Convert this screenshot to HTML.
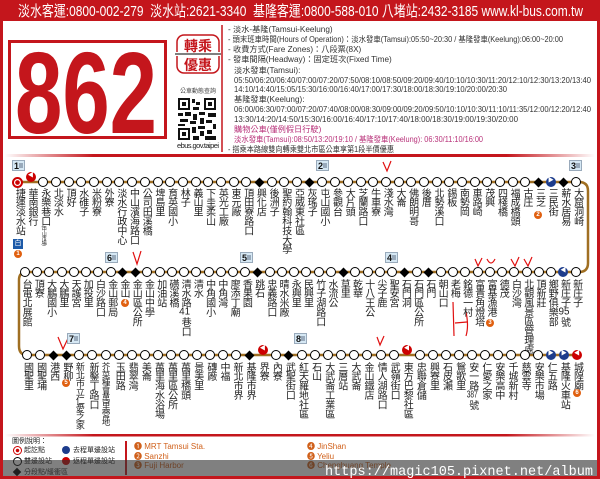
<!DOCTYPE html>
<html><head><meta charset="utf-8"><style>
*{margin:0;padding:0}
body{width:600px;height:479px;position:relative;overflow:hidden;background:#fff;font-family:"Liberation Sans","Noto Sans CJK TC",sans-serif}
.frame{position:absolute;left:0;top:0;width:600px;height:479px;box-sizing:border-box;border:3px solid #c4161c;border-top:none;z-index:5}
.r{position:absolute;display:flex;align-items:flex-start}
.r i{font-style:normal;flex:none;writing-mode:vertical-rl;font-size:10px;position:relative;color:#222;letter-spacing:-0.6px}
.r1 i{width:12.7px;line-height:12.7px;--o:-6px}
.r2 i{width:12.24px;line-height:12.24px;--o:-7px}
.r3 i{width:13.1px;line-height:13.1px;--o:-7px}
.r i::before{content:'';position:absolute;left:50%;top:calc(var(--o) - 5px);box-sizing:border-box;width:10px;height:10px;margin-left:-5px;border:1.6px solid #000;border-radius:50%;background:#fff;writing-mode:horizontal-tb;font-size:6px;line-height:7px;text-align:center;color:#fff;letter-spacing:0}
.r i.d::before{border:0;background:#000;border-radius:0;width:7px;height:7px;margin-left:-3.5px;top:calc(var(--o) - 3.5px);transform:rotate(45deg)}
.r i.s::before{width:11px;height:11px;margin-left:-5.5px;border:2px solid #c00;background:radial-gradient(#c00 0 2px,#fff 2.6px)}
.r i.rl::before{content:'◀';background:#c00;border-color:#c00;top:calc(var(--o) - 10px)}
.r i.rl2::before{content:'◀';background:#c00;border-color:#c00}
.r i.br::before{content:'▶';background:#1d3c8c;border-color:#1d3c8c}
.r i.bl::before{content:'◀';background:#1d3c8c;border-color:#1d3c8c}
.sm{font-size:5px;writing-mode:vertical-rl}
.num{position:absolute;width:8px;height:8px;border-radius:50%;background:#e06010;color:#fff;font-size:6px;line-height:8px;text-align:center;font-weight:bold}
.sec{position:absolute;width:13px;height:11px;background:#d6e8f4;border:1px solid #9ab;box-sizing:border-box;font-size:9px;font-weight:bold;line-height:10px;padding-left:1px;color:#111}
.sec:after{content:'';position:absolute;right:1px;top:2px;width:4px;height:5px;background:#9ab}
.lg{position:absolute;font-size:7px;color:#222}
</style></head><body>
<div class="frame"></div>
<svg width="600" height="479" style="position:absolute;left:0;top:0">
<defs>
<linearGradient id="g" x1="0" x2="1"><stop offset="0" stop-color="#c4161c" stop-opacity="0"/><stop offset="0.15" stop-color="#c4161c"/><stop offset="0.85" stop-color="#c4161c"/><stop offset="1" stop-color="#c4161c" stop-opacity="0"/></linearGradient>
</defs>
<rect x="0" y="0" width="600" height="21" fill="#c4161c"/>
<text x="18" y="16" fill="#fff" font-size="15" textLength="565" lengthAdjust="spacingAndGlyphs" font-family="Liberation Sans, Noto Sans CJK TC, sans-serif">淡水客運:0800-002-279 &#160;淡水站:2621-3340 &#160;基隆客運:0800-588-010 八堵站:2432-3185 www.kl-bus.com.tw</text>
<rect x="9.5" y="41.5" width="156" height="96" fill="none" stroke="#c4161c" stroke-width="3"/>
<text x="15" y="133" fill="#c4161c" font-size="116" font-weight="bold" textLength="142" lengthAdjust="spacingAndGlyphs">862</text>
<rect x="177" y="35" width="42" height="38" rx="7" fill="none" stroke="#c4161c" stroke-width="1.5"/>
<rect x="172" y="52" width="52" height="4" fill="#fff"/>
<line x1="175" y1="54" x2="221" y2="54" stroke="#555" stroke-width="1.5"/>
<text x="198" y="51" fill="#c4161c" font-size="14" font-weight="bold" text-anchor="middle" font-family="Noto Sans CJK TC, sans-serif">轉乘</text>
<text x="198" y="70" fill="#c4161c" font-size="14" font-weight="bold" text-anchor="middle" font-family="Noto Sans CJK TC, sans-serif">優惠</text>
<text x="198" y="93" fill="#444" font-size="6" text-anchor="middle" font-family="Noto Sans CJK TC, sans-serif">公車動態查詢</text>
<g fill="#111">
<rect x="178" y="98" width="12" height="12"/><rect x="204" y="98" width="12" height="12"/><rect x="178" y="128" width="12" height="12"/>
<rect x="180" y="100" width="8" height="8" fill="#fff"/><rect x="206" y="100" width="8" height="8" fill="#fff"/><rect x="180" y="130" width="8" height="8" fill="#fff"/>
<rect x="182" y="102" width="4" height="4"/><rect x="208" y="102" width="4" height="4"/><rect x="182" y="132" width="4" height="4"/>
<rect x="192" y="99" width="3" height="4"/><rect x="196" y="102" width="4" height="3"/><rect x="193" y="107" width="6" height="3"/><rect x="178" y="113" width="5" height="3"/><rect x="185" y="112" width="6" height="4"/><rect x="193" y="114" width="4" height="6"/><rect x="199" y="112" width="6" height="3"/><rect x="208" y="113" width="8" height="4"/><rect x="180" y="119" width="8" height="3"/><rect x="190" y="121" width="6" height="3"/><rect x="200" y="118" width="4" height="6"/><rect x="206" y="120" width="6" height="3"/><rect x="213" y="124" width="3" height="5"/><rect x="192" y="127" width="4" height="6"/><rect x="198" y="126" width="7" height="3"/><rect x="200" y="131" width="4" height="5"/><rect x="207" y="130" width="5" height="4"/><rect x="193" y="136" width="6" height="4"/><rect x="205" y="136" width="11" height="4"/><rect x="178" y="124" width="7" height="2"/>
</g>
<text x="198" y="148" fill="#222" font-size="7.5" text-anchor="middle" textLength="42">ebus.gov.taipei</text>
<line x1="222" y1="25" x2="222" y2="152" stroke="#c4161c" stroke-width="1.5"/>
<g font-size="8.2" fill="#333" font-family="Liberation Sans, Noto Sans CJK TC, sans-serif">
<text x="228" y="32">- 淡水-基隆(Tamsui-Keelung)</text>
<text x="228" y="42" textLength="335" lengthAdjust="spacingAndGlyphs">- 頭末班車時間(Hours of Operation)：淡水發車(Tamsui):05:50~20:30 / 基隆發車(Keelung):06:00~20:00</text>
<text x="228" y="52">- 收費方式(Fare Zones)：八段票(8X)</text>
<text x="228" y="62">- 發車間隔(Headway)：固定班次(Fixed Time)</text>
<text x="234" y="73">淡水發車(Tamsui):</text>
<text x="234" y="83" textLength="357" lengthAdjust="spacingAndGlyphs">05:50/06:20/06:40/07:00/07:20/07:50/08:10/08:50/09:20/09:40/10:10/10:30/11:20/12:10/12:30/13:20/13:40</text>
<text x="234" y="92" textLength="273" lengthAdjust="spacingAndGlyphs">14:10/14:40/15:05/15:30/16:00/16:40/17:00/17:30/18:00/18:30/19:10/20:00/20:30</text>
<text x="234" y="102">基隆發車(Keelung):</text>
<text x="234" y="112" textLength="357" lengthAdjust="spacingAndGlyphs">06:00/06:30/07:00/07:20/07:40/08:00/08:30/09:00/09:20/09:50/10:10/10:30/11:10/11:35/12:00/12:20/12:40</text>
<text x="234" y="122" textLength="284" lengthAdjust="spacingAndGlyphs">13:30/14:20/14:50/15:30/16:00/16:40/17:10/17:40/18:00/18:30/19:00/19:30/20:00</text>
<text x="234" y="132" fill="#b8327a">購物公車(僅例假日行駛)</text>
<text x="234" y="142" fill="#b8327a" textLength="249" lengthAdjust="spacingAndGlyphs">淡水發車(Tamsui):08:50/13:20/19:10 / 基隆發車(Keelung): 06:30/11:10/16:00</text>
<text x="228" y="152" textLength="166" lengthAdjust="spacingAndGlyphs">- 搭乘本路線雙向轉乘雙北市區公車享第1段半價優惠</text>
</g>
<rect x="5" y="154" width="590" height="3" fill="url(#g)"/>
<path d="M18 182 H579 Q588 182 588 191 V263 Q588 272 579 272 H27 Q19 272 19 280 V346 Q19 355 27 355 H577" fill="none" stroke="#a06f22" stroke-width="2.5"/>
<rect x="5" y="434" width="590" height="2.5" fill="url(#g)"/>
<g fill="none" stroke="#e01010" stroke-width="1.2">
<path d="M383 162 L387 171 L391 161"/><path d="M133 252 L137 264 L141 251"/><path d="M475 259 L478 266 L482 258"/><path d="M487 259 Q491 267 495 259"/><path d="M511 259 L515 266 L519 257"/><path d="M524 259 L528 266 L532 257"/><path d="M58 337 L63 349 L70 334"/><path d="M377 337 L380 345 L384 336"/><path d="M453 302 L454 336"/><path d="M466 312 Q469 326 466 336"/><path d="M455 323 L467 322"/>
</g>
</svg>

<div class="sec" style="left:12px;top:160px">1</div>
<div class="sec" style="left:316px;top:160px">2</div>
<div class="sec" style="left:569px;top:160px">3</div>
<div class="sec" style="left:385px;top:252px">4</div>
<div class="sec" style="left:240px;top:252px">5</div>
<div class="sec" style="left:105px;top:252px">6</div>
<div class="sec" style="left:67px;top:333px">7</div>
<div class="sec" style="left:294px;top:333px">8</div>

<div class="r r1" style="left:11.65px;top:188px"><i class="s">捷運淡水站</i><i class="rl">華南銀行</i><i>永樂巷口<span class="sm">(中山市場)</span></i><i>北淡水</i><i>頂好</i><i>水碓子</i><i>米粉寮</i><i>外寮</i><i>淡水行政中心</i><i>中山濱海路口</i><i>公司田溪橋</i><i>埤島里</i><i>育英國小</i><i>林子</i><i>義山里</i><i>下圭柔山</i><i>英光工廠</i><i>東元廠</i><i>頂田寮路口</i><i class="d">興化店</i><i>後洲子</i><i>聖約翰科技大學</i><i>亞威東社區</i><i class="d">灰瑤子</i><i>屯山國小</i><i>參觀台</i><i>大片頭</i><i>芝蘭路口</i><i>牛車寮</i><i>淺水灣</i><i>大崙</i><i>佛朗明哥</i><i>後厝</i><i>北勢溪口</i><i>錫板</i><i>南勢岡</i><i>車路崎</i><i>茂興</i><i>四棧橋</i><i>福成橋頭</i><i>古庄</i><i class="d">三芝</i><i class="br">三民街</i><i class="d">薪水居易</i><i>大窟洞崎</i></div>

<div class="r r2" style="left:18.9px;top:279px"><i>台電北展館</i><i>頂寮</i><i>大鵬國小</i><i>大鵬里</i><i>天護宮</i><i>加投里</i><i>白沙路口</i><i>金山郵局</i><i class="d">金山</i><i class="d">金山區公所</i><i>金山中學</i><i>加油站</i><i>磺溪橋</i><i>清水路<span style="text-combine-upright:all">41</span>巷口</i><i>清水</i><i>中角國小</i><i>中角灣</i><i>廖添丁廟</i><i>香果園</i><i class="d">跳石</i><i>忠義路口</i><i>晴水米廠</i><i>永興里</i><i>民興里</i><i>竹子湖路口</i><i>水流公</i><i class="d">草里</i><i>乾華</i><i>十八王公</i><i>尖子鹿</i><i>聖安宮</i><i class="d">石門洞</i><i>石門區公所</i><i class="d">石門</i><i>朝山口</i><i>老梅</i><i>銘德一村</i><i>富貴角燈塔</i><i>富基漁港</i><i>德茂</i><i>白沙灣</i><i>北觀風景區管理處</i><i>頂新莊</i><i>鄉野俱樂部</i><i class="bl">新庄子<span style="text-combine-upright:all">95</span>號</i><i>新庄子</i></div>

<div class="r r3" style="left:20.45px;top:362px"><i>國聖里</i><i>國聖埔</i><i class="d">港西</i><i class="d">野柳</i><i style="font-size:9px">新北市立仁愛之家</i><i>新鑿丁路口</i><i style="font-size:8.5px">芥菜種會萬里營地</i><i>玉田路</i><i>翡翠灣</i><i>美崙</i><i>萬里海水浴場</i><i>萬里區公所</i><i>萬里橋頭</i><i>景美里</i><i>磚廠</i><i>中福</i><i>新北市界</i><i class="d">基隆市界</i><i class="rl">界寮</i><i>內寮</i><i class="d">武聖街口</i><i>紅天羅地社區</i><i>石山</i><i>大武崙工業區</i><i>三層站</i><i>大武崙</i><i>金山鐵店</i><i>情人湖路口</i><i>武嶺街口</i><i class="rl">東方巴黎社區</i><i>忠聯倉儲</i><i>興寮里</i><i>石皮瀨</i><i>鴛歌里</i><i>安一路<span style="text-combine-upright:all">387</span>號</i><i>仁愛之家</i><i>安樂高中</i><i>千城新村</i><i>慈雲寺</i><i>安樂市場</i><i class="br">仁五路</i><i class="br">基隆火車站</i><i class="rl2">城隍廟</i></div>

<div style="position:absolute;left:13px;top:239px;width:10px;height:10px;background:#1d5aa8;color:#fff;font-size:7px;line-height:10px;text-align:center">白</div>
<div class="num" style="left:14px;top:250px">1</div>
<div class="num" style="left:534px;top:211px">2</div>
<div class="num" style="left:486px;top:319px">3</div>
<div class="num" style="left:121px;top:299px">4</div>
<div class="num" style="left:62px;top:379px">5</div>
<div class="num" style="left:573px;top:389px">6</div>

<div class="lg" style="left:12px;top:436px">圖例說明：</div>
<div style="position:absolute;left:13px;top:446px;width:7px;height:7px;border:1.5px solid #c00;border-radius:50%;background:radial-gradient(#c00 0 1.5px,#fff 2px)"></div>
<div class="lg" style="left:24px;top:445px">起訖點</div>
<div style="position:absolute;left:13px;top:457px;width:7px;height:7px;border:1.5px solid #000;border-radius:50%"></div>
<div class="lg" style="left:24px;top:456px">雙邊設站</div>
<div style="position:absolute;left:14px;top:469px;width:6px;height:6px;background:#000;transform:rotate(45deg)"></div>
<div class="lg" style="left:24px;top:467px">分段點/緩衝區</div>
<div style="position:absolute;left:62px;top:446px;width:8px;height:8px;border-radius:50%;background:#1d3c8c"></div>
<div class="lg" style="left:73px;top:445px">去程單邊設站</div>
<div style="position:absolute;left:62px;top:457px;width:8px;height:8px;border-radius:50%;background:#c00"></div>
<div class="lg" style="left:73px;top:456px">返程單邊設站</div>
<div style="position:absolute;left:125px;top:441px;width:1.5px;height:34px;background:#c4161c"></div>
<div style="position:absolute;left:134px;top:442px;font-size:8px;line-height:9.5px;color:#d0601a">❶ MRT Tamsui Sta.<br>❷ Sanzhi<br>❸ Fuji Harbor</div>
<div style="position:absolute;left:307px;top:442px;font-size:8px;line-height:9.5px;color:#d0601a">❹ JinShan<br>❺ Yeliu<br>❻ Chenghuang Temple</div>
<div style="position:absolute;left:0;top:460px;width:600px;height:19px;background:rgba(50,50,50,0.62);z-index:4"></div>
<svg width="600" height="479" style="position:absolute;left:0;top:0;z-index:6"><text x="325" y="475" fill="#fff" font-size="14" font-family="Liberation Mono, monospace" textLength="268" lengthAdjust="spacingAndGlyphs">https://magic105.pixnet.net/album</text></svg>
</body></html>
